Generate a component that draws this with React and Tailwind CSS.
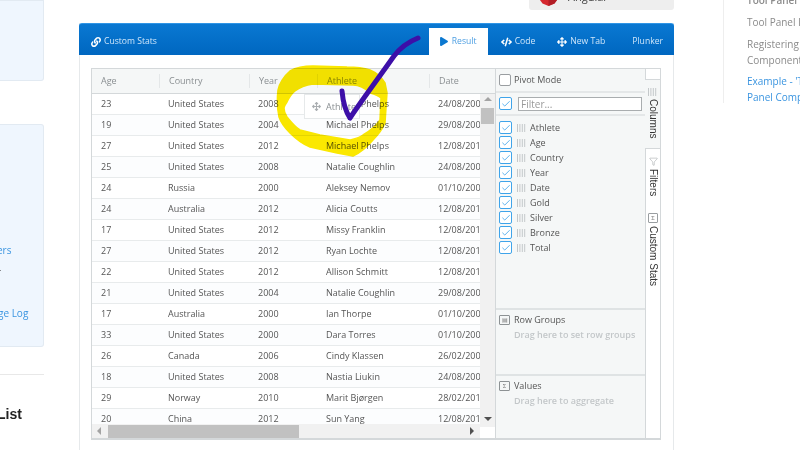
import React from "react";
import { FaLink, FaPlay, FaCode, FaArrowsAlt } from "react-icons/fa";
import { Check, Filter } from "lucide-react";

const rows = [
  ["23", "United States", "2008", "Michael Phelps", "24/08/2008"],
  ["19", "United States", "2004", "Michael Phelps", "29/08/2004"],
  ["27", "United States", "2012", "Michael Phelps", "12/08/2012"],
  ["25", "United States", "2008", "Natalie Coughlin", "24/08/2008"],
  ["24", "Russia", "2000", "Aleksey Nemov", "01/10/2000"],
  ["24", "Australia", "2012", "Alicia Coutts", "12/08/2012"],
  ["17", "United States", "2012", "Missy Franklin", "12/08/2012"],
  ["27", "United States", "2012", "Ryan Lochte", "12/08/2012"],
  ["22", "United States", "2012", "Allison Schmitt", "12/08/2012"],
  ["21", "United States", "2004", "Natalie Coughlin", "29/08/2004"],
  ["17", "Australia", "2000", "Ian Thorpe", "01/10/2000"],
  ["33", "United States", "2000", "Dara Torres", "01/10/2000"],
  ["26", "Canada", "2006", "Cindy Klassen", "26/02/2006"],
  ["18", "United States", "2008", "Nastia Liukin", "24/08/2008"],
  ["29", "Norway", "2010", "Marit Bjørgen", "28/02/2010"],
  ["20", "China", "2012", "Sun Yang", "12/08/2012"],
];

const cols = ["Age", "Country", "Year", "Athlete", "Date"];
const fields = ["Athlete", "Age", "Country", "Year", "Date", "Gold", "Silver", "Bronze", "Total"];
const gridCols = "grid grid-cols-[67px_90px_68px_112px_1fr]";

function Grip() {
  return (
    <svg width="9" height="8" viewBox="0 0 9 8" className="shrink-0">
      <path d="M.5 0v8M2.900 0v8M5.300 0v8M7.700 0v8" stroke="#c4c8ca" strokeWidth="1" />
    </svg>
  );
}

function Box({ checked, size = "w-[13px] h-[13px]" }) {
  return (
    <span className={`${size} shrink-0 flex items-center justify-center rounded-[2px] bg-white border ${checked ? "border-[#3fa4ea]" : "border-[#9a9ea1]"}`}>
      {checked && <Check className="w-[10px] h-[10px] text-[#3fa4ea]" strokeWidth={2} />}
    </span>
  );
}

function DropZone({ title, hint, icon, height }) {
  return (
    <div className={`${height} border-t-2 border-[#dfe3e4] pl-[3px] pt-[3px]`}>
      <div className="flex items-center gap-[4px] h-[14px] text-[9px] text-[#555]">
        <span className="w-[11px] h-[10px] border border-[#8d9294] rounded-[1px] flex items-center justify-center text-[6px] leading-none text-[#777]">{icon}</span>
        {title}
      </div>
      <div className="pl-[15px] mt-[1px] text-[9px] font-semibold leading-[14px] text-[#c3c7c9]">{hint}</div>
    </div>
  );
}

export default function App() {
  return (
    <div className="relative w-[800px] h-[450px] overflow-hidden bg-white flex font-['Open_Sans',sans-serif] text-[9px] text-[#555]">
      {/* left nav, mostly off screen */}
      <div className="w-[44px] shrink-0 flex flex-col">
        <div className="h-[81px] bg-[#eff6fe] border border-l-0 border-[#e2eaf2] rounded-br-[3px]" />
        <div className="mt-[43px] h-[223px] bg-[#eff6fe] border border-l-0 border-[#e2eaf2] rounded-r-[3px] pt-[118px] text-[#3b95e0] text-[10px] leading-[14px]">
          <div className="-ml-[3px]">ers</div>
          <div className="mt-[5px] -ml-[2px] text-[#555]">-</div>
          <div className="mt-[30px] -ml-[2px]">ge Log</div>
        </div>
        <div className="mt-[27px] border-t border-[#e8e8e8]" />
        <div className="mt-[31px] font-['Liberation_Sans',sans-serif] font-bold text-[14px] leading-[16px] text-[#222] -ml-[3px]">List</div>
      </div>

      {/* main example card */}
      <div className="ml-[35px] w-[595px] shrink-0 flex flex-col">
        <div className="h-[10px] flex justify-end">
          <div className="w-[145px] h-[10px] bg-[#eeeeee] rounded-b-[3px] flex items-start overflow-hidden">
            <svg width="17" height="6" viewBox="0 0 17 6" className="ml-[11px]">
              <path d="M0 0h17l-2.500 3.500-6 2.500-6-2.500z" fill="#d5282f" />
              <path d="M8.500 0h8.500l-2.500 3.500-6 2.500z" fill="#b21e26" />
            </svg>
            <span className="ml-[11px] text-[11px] leading-[12px] text-[#444] -mt-[9px]">Angular</span>
          </div>
        </div>

        <div className="mt-[13px] flex-1 flex flex-col border-x border-[#e6e9eb]">
          <div className="h-[32px] -mx-px bg-gradient-to-b from-[#0a78d2] to-[#0067c0] border-t border-[#2f95e6] rounded-t-[3px] flex items-end text-[#cfe6fa] text-[8.600px]">
            <div className="flex-1 h-[27px] flex items-center gap-[3px] pl-[12px]">
              <FaLink className="w-[10px] h-[10px] text-white" />
              Custom Stats
            </div>
            <div className="w-[59px] h-[27px] bg-white text-[#4c9ee2] flex items-center justify-center gap-[4px]">
              <FaPlay className="w-[8px] h-[9px] text-[#0b78d0]" />
              Result
            </div>
            <div className="h-[27px] flex items-center gap-[3px] ml-[13px]">
              <FaCode className="w-[11px] h-[10px] text-white" />
              Code
            </div>
            <div className="h-[27px] flex items-center gap-[3px] ml-[22px]">
              <FaArrowsAlt className="w-[10px] h-[10px] text-white" />
              New Tab
            </div>
            <div className="h-[27px] flex items-center ml-[27px] mr-[11px]">Plunker</div>
          </div>

          <div className="pt-[13px] pl-[11px] pr-[12px]">
            <div className="h-[372px] flex border border-[#d4d8da] border-b-2">
              {/* data grid */}
              <div className="w-[403px] shrink-0 flex flex-col relative">
                <div className={`${gridCols} h-[25px] shrink-0 bg-[#f5f7f7] border-b border-[#d4d8da] text-[#8a8f92] items-center`}>
                  {cols.map((c, i) => (
                    <div key={c} className={`pl-[9px] h-[14px] leading-[14px] ${i > 0 ? "border-l border-[#e4e7e8]" : ""}`}>{c}</div>
                  ))}
                </div>
                <div className="flex-1 min-h-0 flex">
                  <div className="w-[388px] shrink-0 overflow-hidden">
                    {rows.map((r, i) => (
                      <div key={i} className={`${gridCols} h-[21px] items-center border-b border-[#e8ebec] ${i % 2 ? "bg-[#fcfdfe]" : "bg-white"}`}>
                        {r.map((v, j) => (
                          <div key={j} className="pl-[9px] whitespace-nowrap">{v}</div>
                        ))}
                      </div>
                    ))}
                  </div>
                  <div className="w-[15px] h-[333px] shrink-0 bg-[#f1f1f1] flex flex-col items-center">
                    <span className="mt-[3px] w-0 h-0 border-x-[4px] border-x-transparent border-b-[4px] border-b-[#a3a3a3]" />
                    <span className="mt-[7px] w-[13px] h-[16px] bg-[#c1c1c1]" />
                    <span className="mt-auto mb-[6px] w-0 h-0 border-x-[4px] border-x-transparent border-t-[4px] border-t-[#505050]" />
                  </div>
                </div>
                <div className="absolute bottom-0 left-0 w-[388px] h-[14px] bg-[#f1f1f1] flex items-center">
                  <span className="ml-[5px] w-0 h-0 border-y-[4px] border-y-transparent border-r-[4px] border-r-[#a3a3a3]" />
                  <span className="ml-[7px] w-[191px] h-[13px] bg-[#c1c1c1]" />
                  <span className="ml-auto mr-[6px] w-0 h-0 border-y-[4px] border-y-transparent border-l-[4px] border-l-[#505050]" />
                </div>
                {/* column being dragged */}
                <div className="absolute left-[212px] top-[25px] w-[56px] h-[25px] bg-white border border-[#e6e9ea] flex items-center pl-[7px] gap-[5px] text-[#8a8f92]">
                  <FaArrowsAlt className="w-[9px] h-[9px] text-[#a9adb0]" />
                  Athlete
                </div>
              </div>

              {/* tool panel */}
              <div className="w-[150px] shrink-0 bg-[#f5f7f7] border-l border-[#d4d8da] flex flex-col">
                <div className="h-[24px] flex items-center gap-[3px] pl-[3px] border-b-2 border-[#e4e7e8] text-[#555]">
                  <Box size="w-[12px] h-[12px]" />
                  Pivot Mode
                </div>
                <div className="h-[23px] flex items-center gap-[6px] pl-[3px] pr-[3px] border-b-2 border-[#e4e7e8]">
                  <Box checked />
                  <div className="flex-1 h-[14px] bg-white border border-[#a9adaf] pl-[2px] leading-[12px] text-[10px] text-[#999]">Filter...</div>
                </div>
                <div className="h-[192px] pl-[3px] pt-[4px]">
                  {fields.map((f) => (
                    <div key={f} className="h-[15px] flex items-center">
                      <Box checked />
                      <span className="ml-[5px]"><Grip /></span>
                      <span className="ml-[4px]">{f}</span>
                    </div>
                  ))}
                </div>
                <DropZone title="Row Groups" hint="Drag here to set row groups" icon="▤" height="h-[66px]" />
                <DropZone title="Values" hint="Drag here to aggregate" icon="Σ" height="flex-1" />
              </div>

              {/* side buttons */}
              <div className="w-[15px] shrink-0 flex flex-col font-['Liberation_Sans',sans-serif] text-[10px] text-[#333]">
                <div className="h-[11px] bg-white border-b border-l border-[#d4d8da]" />
                <div className="h-[68px] bg-[#f5f7f7] flex flex-col items-center pt-[8px]">
                  <Grip />
                  <span className="mt-[3px] [writing-mode:vertical-rl] leading-none">Columns</span>
                </div>
                <div className="flex-1 bg-white border-l border-t border-[#d4d8da] flex flex-col items-center pt-[8px]">
                  <Filter className="w-[9px] h-[9px] text-[#8d9294]" strokeWidth={1.2} />
                  <span className="mt-[3px] [writing-mode:vertical-rl] leading-none">Filters</span>
                  <span className="mt-[17px] w-[10px] h-[10px] border border-[#9a9ea1] rounded-[1px] text-[6px] leading-[8px] text-center text-[#777] font-['Open_Sans',sans-serif]">Σ</span>
                  <span className="mt-[3px] [writing-mode:vertical-rl] leading-none">Custom Stats</span>
                </div>
              </div>
            </div>
          </div>
        </div>
      </div>

      {/* right hand contents list */}
      <div className="ml-[49px] h-[103px] flex-1 min-w-0 border-l border-[#eeeeee] pl-[23px] text-[10px] leading-[16px] text-[#8b8b8b] whitespace-nowrap">
        <div className="-mt-[8px] font-semibold">Tool Panel Instance</div>
        <div className="mt-[6px]">Tool Panel Instance</div>
        <div className="mt-[6px]">Registering</div>
        <div>Component</div>
        <div className="mt-[5px] text-[#3b95e0]">Example - 'Tool</div>
        <div className="text-[#3b95e0]">Panel Component</div>
      </div>

      {/* marker scribbles drawn over the video */}
      <svg className="absolute inset-0 pointer-events-none" width="800" height="450" viewBox="0 0 800 450">
        <path
          fillRule="evenodd"
          className="mix-blend-multiply"
          fill="#fbe800"
          stroke="#fbe800"
          strokeWidth="1.500"
          strokeLinejoin="round"
          d="M290 71C297 67 305 66 313 66L347 67C356 67 364 68 370 70C377 73 382 78 385 83L387 93L385 123C382 130 378 135 373 140C367 147 360 153 353 156L337 153L310 147C302 144 296 139 290 133C285 128 281 123 279 117C277 108 277 99 278 90C279 84 284 76 290 71ZM295 91C291 94 289 98 287 102C285 105 284 106 284 108C284 111 285 114 287 117C291 122 295 127 300 130L320 135L350 140C354 139 359 138 363 135C370 131 376 126 380 120L381 98C378 95 374 94 370 93C365 88 359 85 353 85L313 84C306 85 300 87 295 91Z"
        />
        <path d="M418 38C408 42 400 48 394 56C380 76 362 100 350 118C346 112 343 102 342 91" fill="none" stroke="#3d0fa8" strokeWidth="5" strokeLinecap="round" strokeLinejoin="round" />
      </svg>
    </div>
  );
}
